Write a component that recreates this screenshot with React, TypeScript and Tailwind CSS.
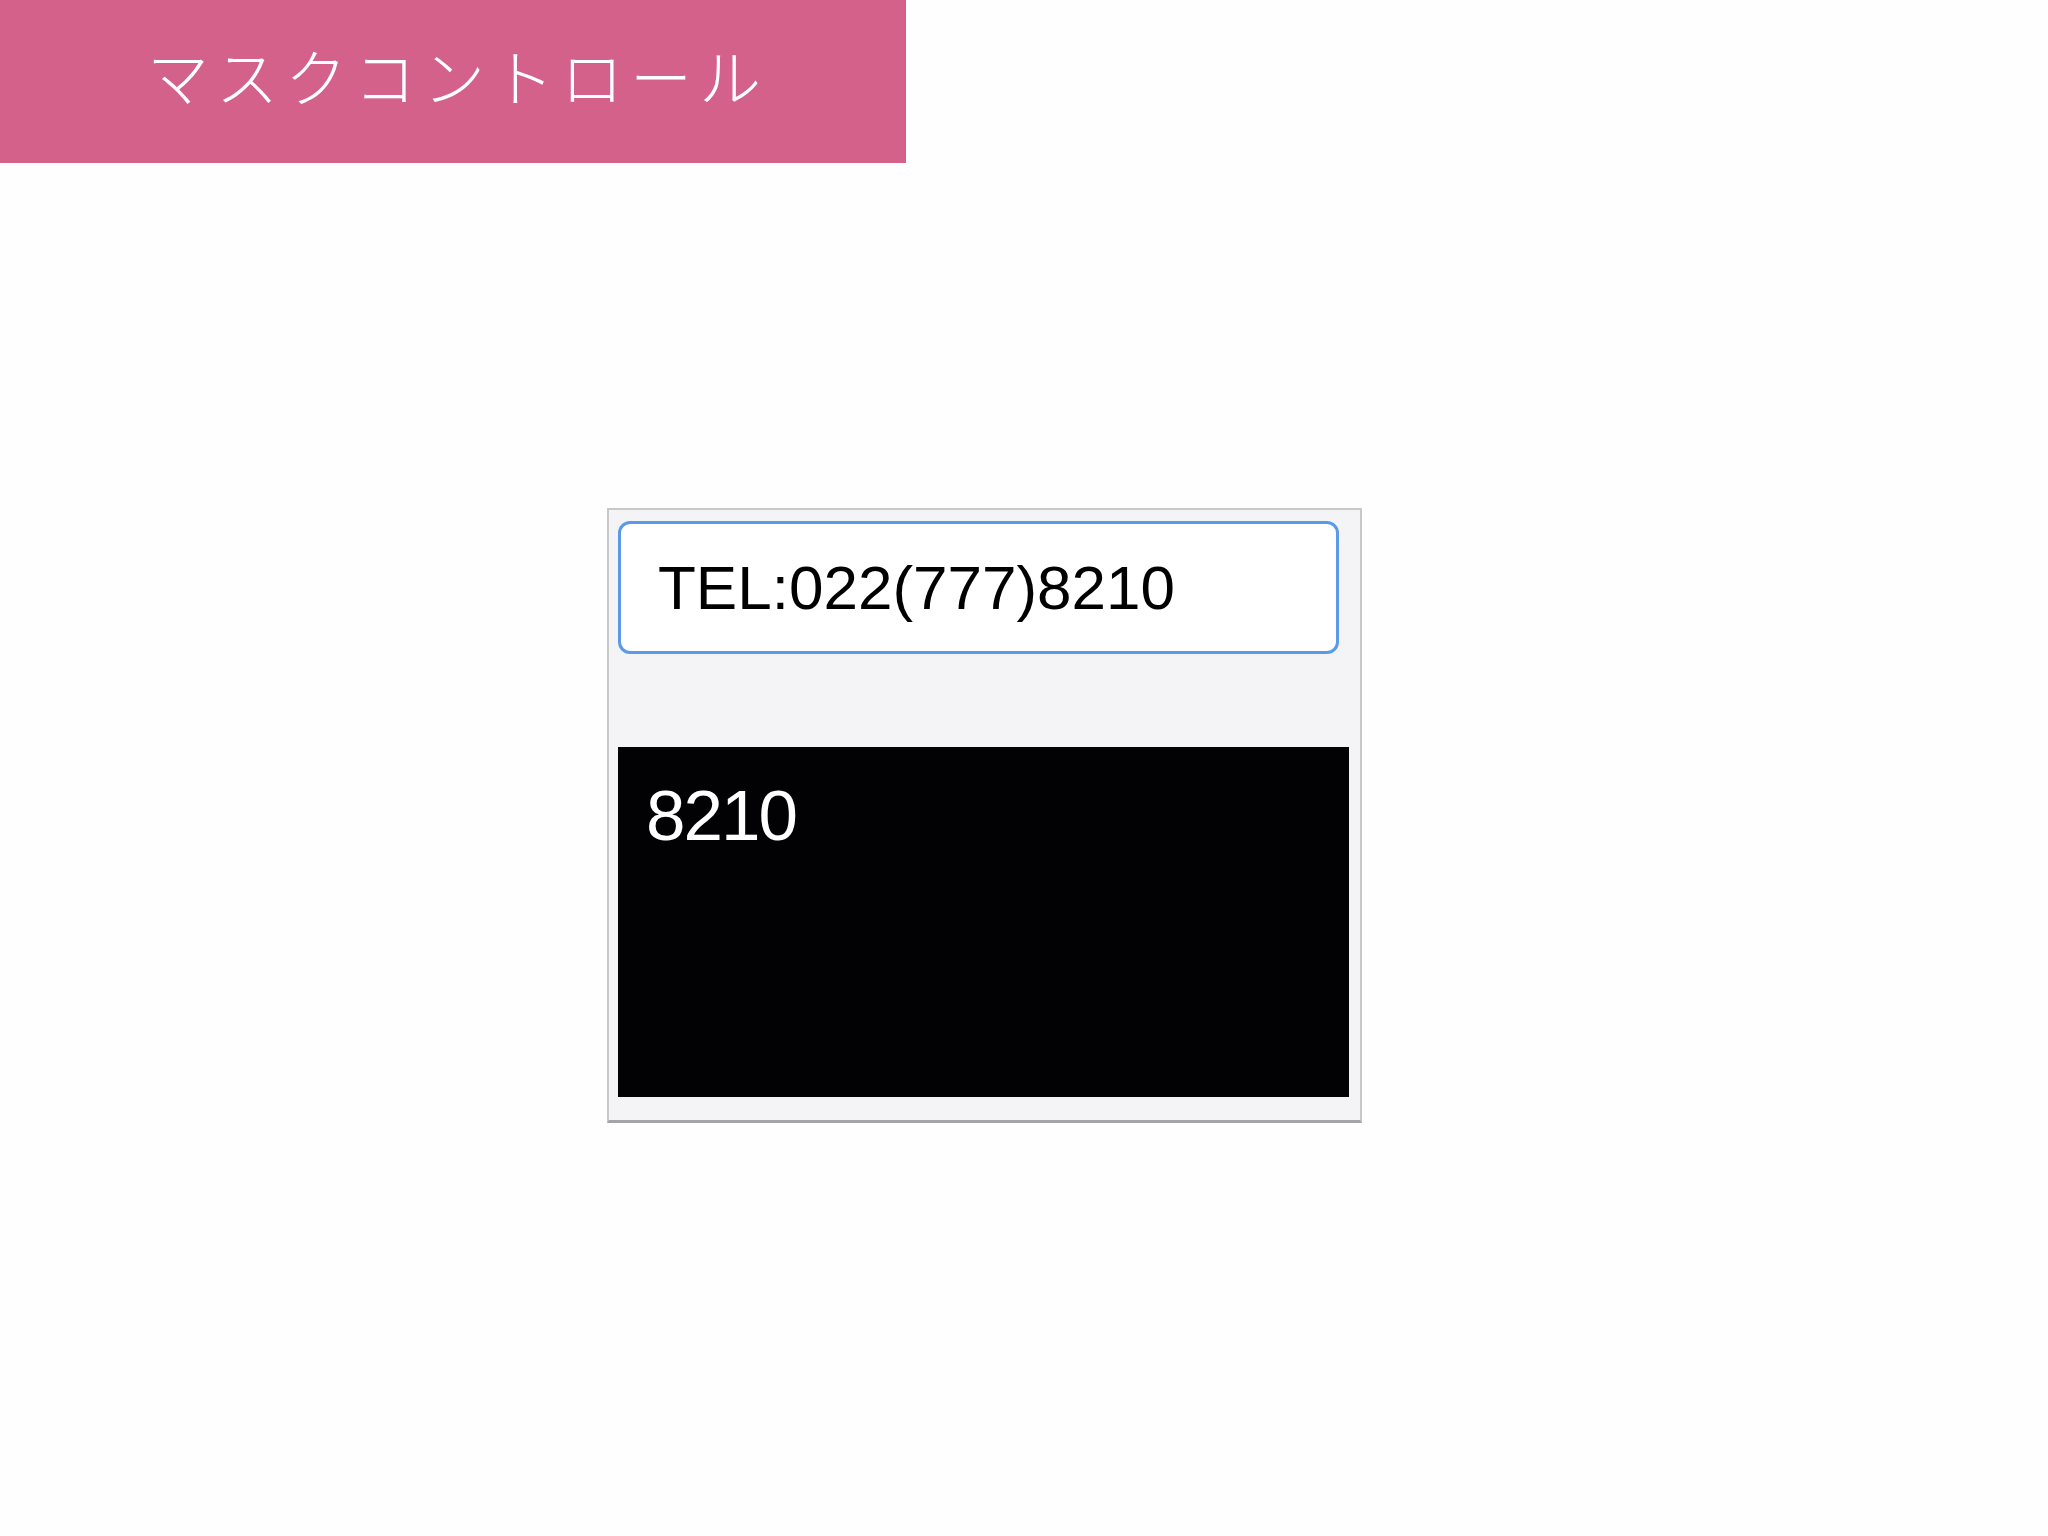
const sans = "font-['Liberation_Sans','Noto_Sans_CJK_JP',sans-serif]";

function Header() {
  return (
    <header className="flex h-[163px] w-[906px] items-center bg-[#d3618a] pb-[14px] pl-[147px]">
      <h1 className="font-['Noto_Sans_CJK_JP',sans-serif] text-[62px] font-light leading-none tracking-[7px] text-white">
        マスクコントロール
      </h1>
    </header>
  );
}

function MaskPanel({ value, tail }: { value: string; tail: string }) {
  return (
    <div className="flex w-[755px] flex-col border-2 border-b-[3px] border-[#c8c8ca] border-b-[#a4a3a8] bg-[#f4f3f6] pb-[23px] pl-[9px] pr-[13px] pt-[11px]">
      <input
        readOnly
        value={value}
        className={`${sans} h-[133px] w-[721px] rounded-[12px] border-[3px] border-[#5b9aea] bg-white pl-[37px] text-[62px] leading-none text-black outline-none`}
      />
      <div className="mt-[93px] h-[350px] w-[731px] bg-[#020104] pl-[28px] pt-[33px]">
        <span className={`${sans} text-[71px] leading-none tracking-[-2px] text-white`}>{tail}</span>
      </div>
    </div>
  );
}

export default function App() {
  return (
    <div className="min-h-screen bg-[#fefefe]">
      <Header />
      <div className="pl-[607px] pt-[345px]">
        <MaskPanel value="TEL:022(777)8210" tail="8210" />
      </div>
    </div>
  );
}
